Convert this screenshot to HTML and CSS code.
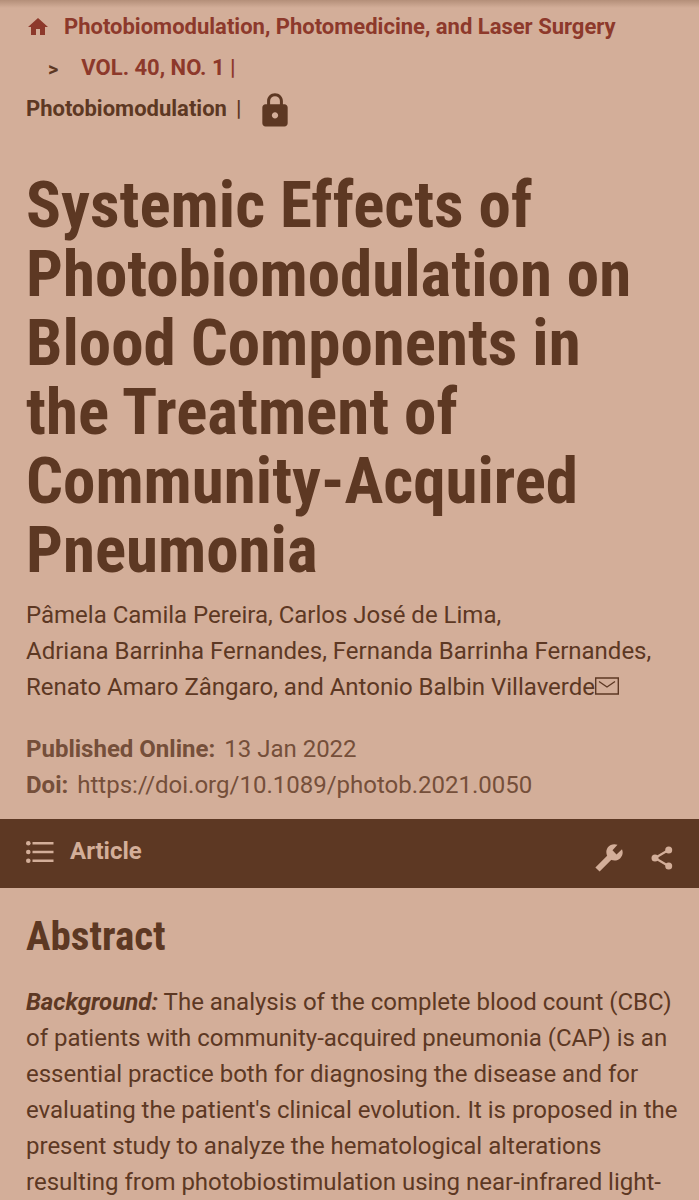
FILE: index.html
```html
<!DOCTYPE html>
<html lang="en">
<head>
<meta charset="utf-8">
<meta name="viewport" content="width=device-width, initial-scale=1">
<title>Systemic Effects of Photobiomodulation</title>
<link rel="stylesheet" href="styles.css">
</head>
<body>
<header class="masthead">
  <nav class="breadcrumb" aria-label="Breadcrumb">
    <div class="crumb-row">
      <a href="#home" aria-label="Home" class="home"><svg width="24" height="24" viewBox="0 0 24 24" fill="currentColor"><path d="M10 20v-6h4v6h5v-8h3L12 3 2 12h3v8z"/></svg></a>
      <a href="#journal">Photobiomodulation, Photomedicine, and Laser Surgery</a>
    </div>
    <div class="crumb-row crumb-issue"><span class="arrow">&gt;</span><a href="#issue">VOL. 40, NO. 1 |</a></div>
  </nav>
  <div class="section-row"><span>Photobiomodulation</span><span class="bar">|</span>
    <svg class="lock" width="38" height="38" viewBox="0 0 24 24" fill="currentColor" role="img" aria-label="Restricted access"><path fill-rule="evenodd" d="M18 9h-1V7c0-2.760-2.240-5-5-5S7 4.240 7 7v2H6c-1.100 0-2 .9-2 2v10c0 1.100.9 2 2 2h12c1.100 0 2-.9 2-2V11c0-1.100-.9-2-2-2zM12 18c-1.100 0-2-.9-2-2s.9-2 2-2 2 .9 2 2-.9 2-2 2zm3.100-9H8.900V7a3.100 3.100 0 0 1 6.200 0v2z"/></svg>
  </div>
  <h1>Systemic Effects of Photobiomodulation on Blood Components in the Treatment of Community-Acquired Pneumonia</h1>
  <p class="authors"><span>Pâmela Camila Pereira</span>, <span>Carlos José de Lima</span>, <span>Adriana Barrinha Fernandes</span>, <span>Fernanda Barrinha Fernandes</span>, <span>Renato Amaro Zângaro</span>, and <span>Antonio Balbin Villaverde<svg class="mail" width="24" height="18" viewBox="0 0 24 18" fill="none" stroke="currentColor"><path stroke-width="1.400" d="M.7 1h22.600v16H.7zM4 4.500l8 5.500 8-5.500"/></svg></span></p>
  <div class="meta">
    <div><b>Published Online:</b><span>13 Jan 2022</span></div>
    <div><b>Doi:</b><span>https://doi.org/10.1089/photob.2021.0050</span></div>
  </div>
</header>
<div class="toolbar">
  <button type="button" class="sections"><svg width="28" height="22" viewBox="0 0 28 22" fill="currentColor"><circle cx="2.300" cy="2.300" r="2.300"/><circle cx="2.300" cy="11" r="2.300"/><circle cx="2.300" cy="19.700" r="2.300"/><path d="M6.500 1h21v2.600h-21zM6.500 9.700h21v2.600h-21zM6.500 18.400h21V21h-21z"/></svg>Article</button>
  <div class="tools">
    <button type="button" aria-label="Tools"><svg width="28" height="28" viewBox="0 0 28 28"><path d="M2.500 25.500L17 11" stroke="currentColor" stroke-width="6" fill="none"/><path fill="currentColor" d="M22.500.8C19 -.4 15 .5 12.900 3.200C11 5.800 11 9 12 11.500L16.500 16C19.500 17 23 16.500 25.300 14.200C27.700 11.800 28.300 8.500 27 5.300L21.500 10.500L17.500 6.300z"/></svg></button>
    <button type="button" aria-label="Share"><svg width="26" height="26" viewBox="0 0 26 26" fill="currentColor"><path d="M19.500 5L6 13l13.500 8" fill="none" stroke="currentColor" stroke-width="2.200"/><circle cx="19.700" cy="5" r="3.500"/><circle cx="6" cy="13" r="3.500"/><circle cx="19.700" cy="21" r="3.500"/></svg></button>
  </div>
</div>
<main class="abstract">
  <h2>Abstract</h2>
  <p><em>Background:</em> The analysis of the complete blood count (CBC) of patients with community-acquired pneumonia (CAP) is an essential practice both for diagnosing the disease and for evaluating the patient's clinical evolution. It is proposed in the present study to analyze the hematological alterations resulting from photobiostimulation using near-infrared light-</p>
</main>
</body>
</html>
```
FILE: styles.css
```css
* { box-sizing: border-box; }
body {
  margin: 0;
  background: #d3ae99;
  color: #5d3823;
  font: 24px/36px Roboto, "Liberation Sans", sans-serif;
}
.masthead {
  padding: 6px 26px 16px;
  background: linear-gradient(#b48f79, #d3ae99 8px);
}
a { color: #8d392b; text-decoration: none; }
svg { display: block; }
.breadcrumb, .section-row { font-size: 22px; line-height: 41px; font-weight: 700; }
.crumb-row { display: flex; align-items: center; gap: 14px; }
.crumb-issue { padding-left: 22px; gap: 23px; }
.arrow { font-size: 20px; padding-top: 4px; line-height: 37px; }
.section-row { display: flex; align-items: center; gap: 9px; }
.bar { font-weight: 500; }
.lock { margin-left: 6px; }
h1 {
  margin: 42px 0 12px;
  font: 700 65px/69px "Roboto Condensed", Roboto, sans-serif;
}
.authors { margin: 0 0 26px; }
.authors span { white-space: nowrap; }
.mail { display: inline-block; }
.meta div { display: flex; gap: 9px; }
.meta { color: #754f3a; }
.toolbar {
  display: flex;
  align-items: center;
  justify-content: space-between;
  min-height: 69px;
  padding: 0 24px 0 26px;
  background: #5d3823;
}
button { display: flex; align-items: center; padding: 0; border: 0; background: none; color: #d3ae99; font: inherit; }
.sections { gap: 16px; font-weight: 700; padding-bottom: 6px; }
.sections svg { margin-top: 2px; }
.tools { display: flex; align-items: center; gap: 26px; padding-top: 8px; }
.abstract { padding: 24px 20px 0 26px; }
h2 { margin: 0 0 24px; font: 700 41px/48px "Roboto Condensed", Roboto, sans-serif; }
.abstract p { margin: 0; }
em { font-weight: 700; }
```
